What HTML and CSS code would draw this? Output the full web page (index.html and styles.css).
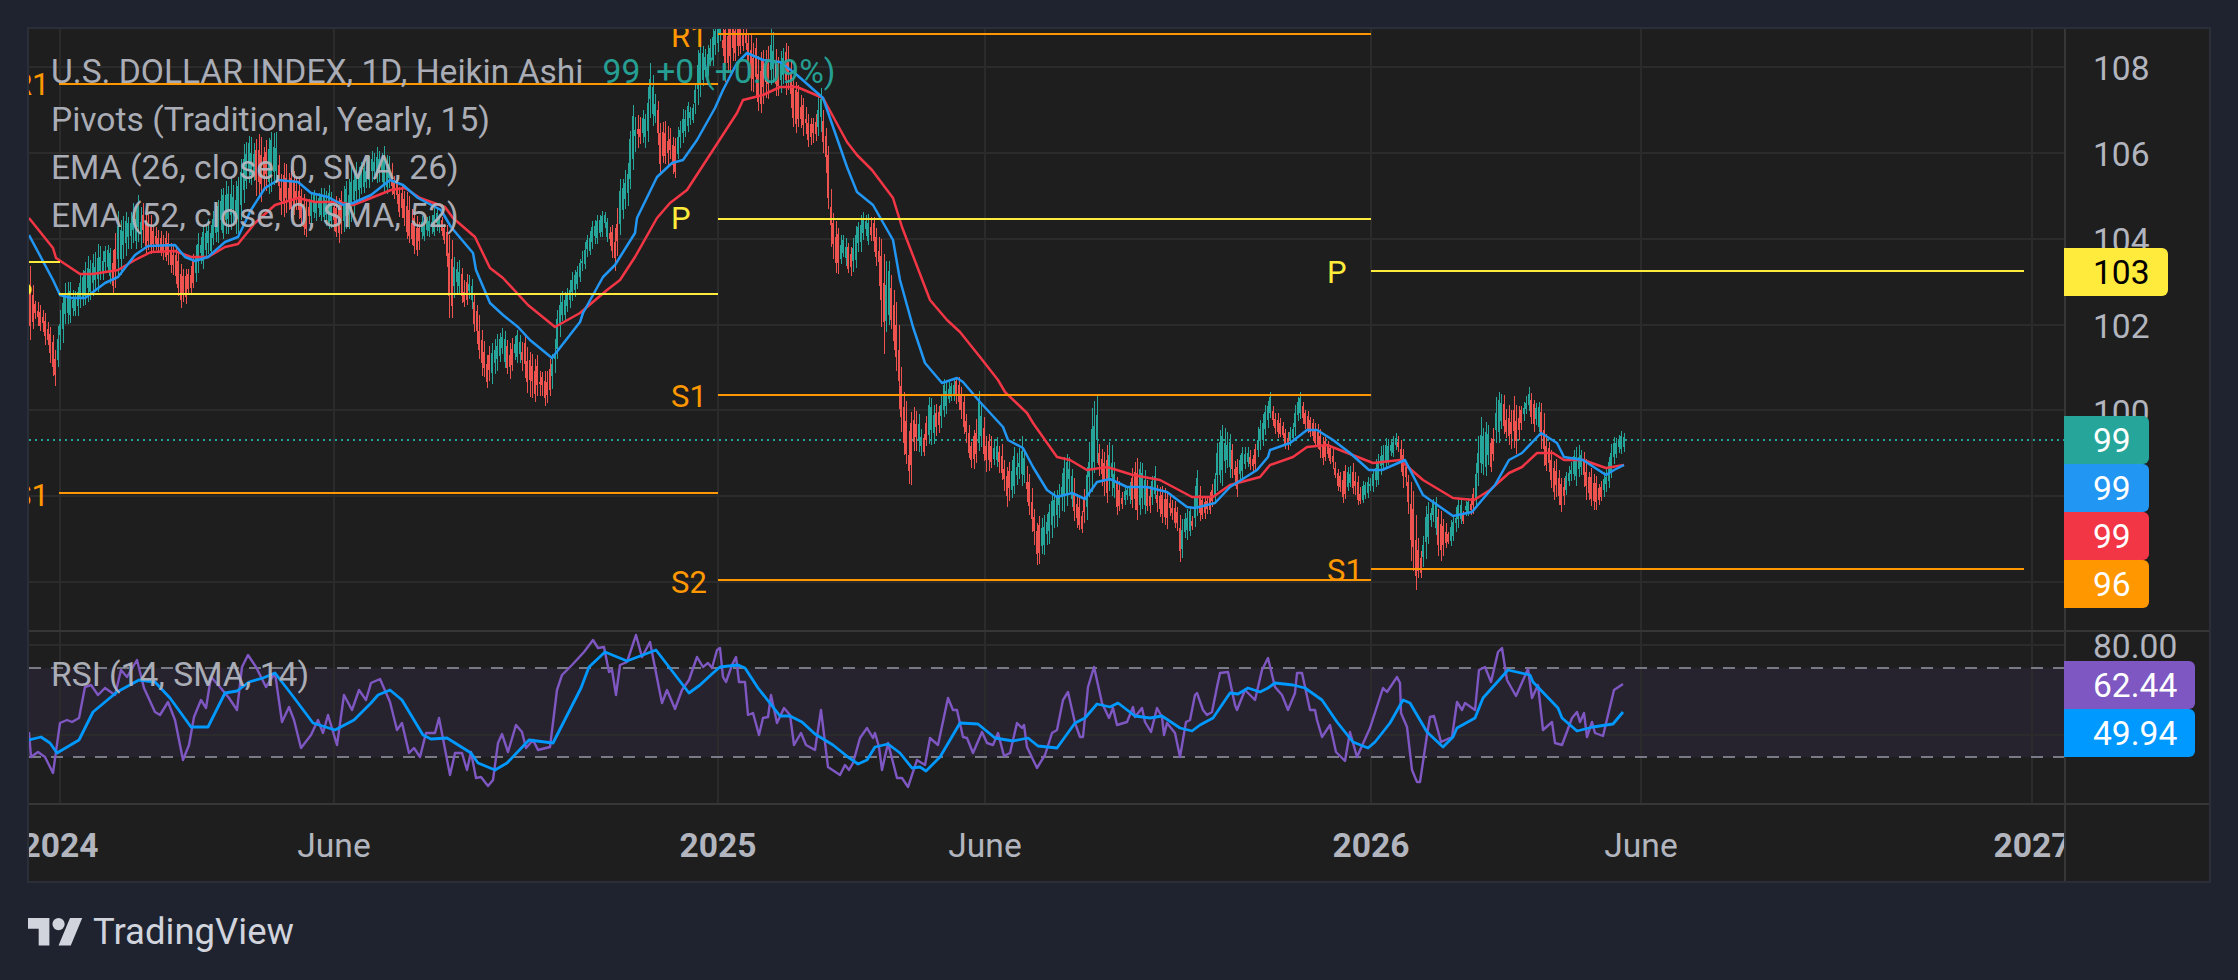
FILE: index.html
```html
<!DOCTYPE html>
<html>
  <head>
    <meta charset="UTF-8">
    <title>U.S. Dollar Index</title>
    <link rel="stylesheet" href="styles.css">
  </head>
  <body>
    <main class="page">
      <div class="chart">

        <!-- price pane -->
        <div class="pane">
          <svg class="plot" viewBox="29 29 2035 601">
            <g class="grid">
              <path d="M29 67H2064M29 153H2064M29 239H2064M29 325H2064M29 410H2064M29 496H2064M29 582H2064"/>
              <path d="M60 29V630M334 29V630M718 29V630M985 29V630M1371 29V630M1641 29V630M2032 29V630"/>
            </g>
            <path class="last-price" d="M29 440H2064"/>
            <g id="candles"></g>
            <polyline class="ema-slow" points="29,218 53,248 56,258 80,274 93,274 118,270 135,260 151,252 175,251 191,257 208,257 225,247 238,244 255,223 275,205 298,198 315,202 338,202 353,205 371,198 391,190 405,188 420,198 445,207 453,218 475,237 490,268 503,278 528,305 555,327 580,313 607,290 620,280 635,257 657,218 670,203 687,190 713,150 737,113 743,100 763,95 780,87 797,87 823,98 847,142 857,155 872,170 893,198 902,227 925,287 930,300 947,320 960,332 980,357 998,380 1005,392 1027,413 1033,423 1057,457 1070,460 1087,470 1107,467 1133,475 1160,480 1192,497 1213,497 1230,485 1260,477 1270,465 1293,457 1307,447 1327,445 1350,454 1373,463 1400,460 1423,480 1453,498 1474,500 1490,490 1509,473 1522,467 1537,453 1553,453 1564,460 1583,460 1606,468 1624,465"/>
            <polyline class="ema-fast" points="29,235 53,280 60,295 71,298 85,298 105,283 118,277 135,255 148,246 175,245 185,257 195,261 208,257 225,242 238,237 251,210 265,188 278,180 298,182 311,193 328,197 343,205 353,203 371,195 390,180 403,185 418,198 441,210 451,227 473,253 476,270 490,303 503,315 518,327 530,340 552,358 580,322 583,313 603,277 615,265 635,233 637,218 657,177 672,163 683,160 697,140 715,108 723,90 737,63 747,53 763,60 780,62 797,75 823,98 847,167 857,192 873,205 893,240 900,280 913,327 925,363 942,383 957,378 963,382 980,402 1003,427 1008,440 1023,448 1033,467 1047,490 1057,497 1072,493 1085,499 1097,482 1110,479 1127,487 1147,487 1167,492 1187,507 1195,508 1215,503 1230,487 1257,470 1268,457 1270,450 1290,443 1307,430 1317,430 1333,440 1350,453 1369,470 1382,470 1405,460 1423,495 1453,516 1472,512 1482,500 1495,485 1509,460 1522,453 1541,433 1557,443 1564,457 1583,460 1606,475 1614,470 1624,465"/>
            <path class="pivot-p" d="M29 262H60M59 294H718M718 219H1371M1371 271H2024"/>
            <path class="pivot-o" d="M59 84H718M59 493H718M718 34H1371M718 395H1371M718 580H1371M1371 569H2024"/>
            <text class="tag tag-o" x="13" y="95">R1</text>
            <text class="tag tag-p" x="13" y="305">P</text>
            <text class="tag tag-o" x="13" y="506">S1</text>
            <text class="tag tag-o" x="671" y="47">R1</text>
            <text class="tag tag-p" x="671" y="229">P</text>
            <text class="tag tag-o" x="671" y="407">S1</text>
            <text class="tag tag-o" x="671" y="593">S2</text>
            <text class="tag tag-p" x="1327" y="283">P</text>
            <text class="tag tag-o" x="1327" y="581">S1</text>
          </svg>
          <div class="legend">
            <div class="legend-row">
              <span>U.S. DOLLAR INDEX, 1D, Heikin Ashi</span>
              <span class="legend-up">99</span>
              <span class="legend-up">+0</span>
              <span class="legend-up">(+0.09%)</span>
            </div>
            <div class="legend-row">Pivots (Traditional, Yearly, 15)</div>
            <div class="legend-row">EMA (26, close, 0, SMA, 26)</div>
            <div class="legend-row">EMA (52, close, 0, SMA, 52)</div>
          </div>
        </div>

        <div class="pane axis">
          <div class="ticks">
            <div class="tick">108</div>
            <div class="tick">106</div>
            <div class="tick">104</div>
            <div class="tick">102</div>
            <div class="tick">100</div>
          </div>
          <div class="badge badge-pivot">103</div>
          <div class="badge-stack badge-stack-price">
            <div class="badge teal">99</div>
            <div class="badge blue">99</div>
            <div class="badge red">99</div>
            <div class="badge orange">96</div>
          </div>
        </div>

        <!-- rsi pane -->
        <div class="pane">
          <svg class="plot" viewBox="29 632 2035 171">
            <rect class="rsi-band" x="29" y="668" width="2035" height="89"/>
            <g class="grid">
              <path d="M29 645H2064M29 735H2064"/>
              <path d="M60 632V803M334 632V803M718 632V803M985 632V803M1371 632V803M1641 632V803M2032 632V803"/>
            </g>
            <path class="rsi-limit" d="M29 668H2064M29 757H2064"/>
            <polyline class="rsi-line" points="29,732 31,757 38,752 45,757 53,773 60,723 67,720 72,722 79,718 85,687 91,685 98,695 105,688 115,695 121,670 127,677 137,660 144,688 155,712 160,715 168,702 175,720 183,760 189,745 194,717 201,700 206,708 211,677 220,687 229,698 237,710 242,667 248,655 256,667 266,687 275,673 282,722 289,707 294,720 301,748 311,735 318,720 323,733 328,715 337,745 344,695 352,710 359,690 366,700 371,683 380,679 390,702 397,730 402,723 409,753 414,748 420,757 426,733 435,733 439,718 450,775 455,753 462,753 467,770 471,752 476,778 481,777 488,786 493,780 498,743 502,734 508,752 516,725 522,732 526,748 533,740 538,750 550,747 557,690 562,675 572,665 584,652 593,640 598,648 604,647 609,672 612,670 616,695 620,665 627,662 636,635 642,657 650,642 658,683 662,703 667,690 675,709 682,690 689,680 697,657 703,667 708,663 712,668 717,650 720,648 723,677 726,682 732,665 736,657 739,682 745,682 748,715 753,713 759,735 763,718 768,717 771,695 777,723 784,708 790,715 794,745 801,733 806,745 815,750 821,710 828,767 840,775 845,765 849,770 853,763 860,738 867,728 873,738 875,733 879,747 882,770 888,743 897,778 902,778 908,787 917,760 925,765 930,738 938,745 948,698 953,710 957,710 963,737 967,738 973,753 982,732 987,743 993,745 998,733 1004,756 1010,753 1017,723 1022,728 1024,725 1027,747 1037,768 1045,755 1052,733 1057,730 1063,700 1068,692 1075,723 1080,737 1083,737 1088,687 1094,667 1102,703 1109,718 1113,708 1117,725 1127,722 1133,707 1135,717 1142,708 1145,722 1151,732 1157,708 1162,717 1164,735 1167,723 1175,733 1180,757 1186,722 1190,720 1195,695 1197,693 1203,710 1207,715 1212,712 1217,687 1220,673 1228,672 1235,705 1237,710 1245,690 1255,700 1262,670 1268,658 1275,687 1282,695 1288,710 1295,693 1297,673 1302,673 1310,710 1315,710 1317,720 1322,737 1330,725 1336,752 1345,761 1350,732 1357,757 1370,728 1383,688 1387,692 1397,677 1400,683 1401,713 1407,727 1412,770 1417,782 1420,782 1427,735 1430,717 1434,716 1441,742 1452,737 1457,702 1462,710 1465,703 1475,710 1479,670 1485,667 1491,682 1498,652 1502,648 1507,680 1516,696 1528,669 1532,698 1538,685 1543,730 1552,722 1555,743 1562,745 1572,718 1577,712 1580,722 1584,713 1587,737 1592,722 1595,733 1603,736 1614,690 1623,684"/>
            <polyline class="rsi-avg" points="29,740 41,737 50,743 57,753 79,740 93,712 117,692 139,680 155,682 170,698 191,727 208,727 225,693 237,691 249,682 263,678 275,673 292,695 313,723 335,730 354,720 371,703 378,695 390,690 402,700 423,735 431,739 447,738 471,753 478,763 495,770 507,763 529,740 553,743 581,688 589,667 605,652 627,661 656,650 689,693 700,685 713,673 720,667 738,665 745,668 758,688 780,716 790,716 802,722 815,734 833,745 848,757 858,764 867,760 875,747 888,744 900,753 912,768 920,767 926,771 940,757 960,723 978,724 995,738 1013,741 1028,738 1038,746 1057,748 1075,723 1085,718 1097,704 1110,707 1118,703 1135,716 1150,718 1162,716 1180,728 1192,731 1200,725 1213,718 1230,693 1238,694 1248,688 1260,692 1268,688 1275,683 1293,685 1305,688 1322,700 1337,722 1353,742 1368,748 1375,742 1390,723 1403,700 1410,703 1427,732 1443,747 1453,737 1457,728 1475,718 1483,698 1508,670 1530,675 1533,682 1558,708 1562,718 1577,731 1593,727 1613,724 1623,712"/>
          </svg>
          <div class="legend legend-rsi">
            <div class="legend-row">RSI (14, SMA, 14)</div>
          </div>
        </div>

        <div class="pane axis">
          <div class="tick tick-rsi">80.00</div>
          <div class="badge-stack badge-stack-rsi">
            <div class="badge purple">62.44</div>
            <div class="badge sky">49.94</div>
          </div>
        </div>

        <!-- time scale -->
        <div class="pane">
          <svg class="plot" viewBox="29 805 2035 76">
            <text class="date date-year" x="60" y="857">2024</text>
            <text class="date" x="334" y="857">June</text>
            <text class="date date-year" x="718" y="857">2025</text>
            <text class="date" x="985" y="857">June</text>
            <text class="date date-year" x="1371" y="857">2026</text>
            <text class="date" x="1641" y="857">June</text>
            <text class="date date-year" x="2032" y="857">2027</text>
          </svg>
        </div>
        <div class="pane"></div>
      </div>

      <footer class="brand">
        <svg class="brand-mark" viewBox="0 4 36 18">
          <path d="M14 22H7V11H0V4h14v18zM28 22h-8l7.5-18h8L28 22z"/>
          <circle cx="20" cy="8" r="4"/>
        </svg>
        <span class="brand-name">TradingView</span>
      </footer>
    </main>
    <script src="chart.js"></script>
  </body>
</html>
```

FILE: styles.css
```css
*{
  box-sizing: border-box;
}
html, body{
  margin: 0;
  padding: 0;
  width: 100%;
  height: 100%;
  overflow: hidden;
  background: #1e232f;
}
body{
  font-family: 'Roboto', 'Liberation Sans', sans-serif;
  font-size: 33.6px;
  color: #b2b5be;
}
.page{
  padding: 27px 0 0 27px;
}

/* chart frame: the 2px gaps show through as pane dividers */
.chart{
  display: grid;
  grid-template-columns: 2035px 143px;
  grid-template-rows: 601px 171px 76px;
  gap: 2px;
  width: 2184px;
  height: 856px;
  background: #363636;
  border: 2px solid #2a2e39;
}
.pane{
  position: relative;
  background: #1e1e1e;
  overflow: hidden;
}
.plot{
  display: block;
  width: 100%;
  height: 100%;
}

/* plot lines */
.grid path{
  fill: none;
  stroke: #2b2b2b;
  stroke-width: 2;
}
.last-price{
  fill: none;
  stroke: #26a69a;
  stroke-width: 2;
  stroke-dasharray: 2 4;
}
.wick-up, .body-up, .wick-down, .body-down{
  fill: none;
  shape-rendering: crispEdges;
}
.wick-up{ stroke: #26a69a; stroke-width: 1; }
.body-up{ stroke: #26a69a; stroke-width: 2; }
.wick-down{ stroke: #ef5350; stroke-width: 1; }
.body-down{ stroke: #ef5350; stroke-width: 2; }
.ema-fast, .ema-slow, .rsi-line, .rsi-avg{
  fill: none;
  stroke-width: 2.5;
  stroke-linejoin: round;
}
.ema-fast{ stroke: #2196f3; }
.ema-slow{ stroke: #f23645; }
.rsi-line{ stroke: #7e57c2; stroke-width: 2.4; }
.rsi-avg{ stroke: #0099ff; stroke-width: 2.8; }
.pivot-p, .pivot-o{
  fill: none;
  stroke-width: 2;
}
.pivot-p{ stroke: #ffeb3b; }
.pivot-o{ stroke: #ff9800; }
.tag{
  font-size: 31px;
}
.tag-p{ fill: #ffeb3b; }
.tag-o{ fill: #ff9800; }
.rsi-band{
  fill: rgba(126, 87, 194, 0.1);
}
.rsi-limit{
  fill: none;
  stroke: #787b86;
  stroke-width: 2;
  stroke-dasharray: 12 10;
}

/* legend sits over the plot */
.legend{
  position: absolute;
  left: 22px;
  top: 19px;
  opacity: 0.95;
}
.legend-row{
  display: flex;
  gap: 16px;
  height: 48px;
  line-height: 48px;
  white-space: nowrap;
}
.legend-up{
  color: #26a69a;
}
.legend-up:nth-child(2){
  margin-left: 3px;
}
.legend-up:last-child{
  margin-left: -7px;
}

/* price scale */
.axis{
  padding-left: 27px;
  overflow: visible;
}
.ticks{
  margin-top: -3px;
}
.tick{
  height: 86px;
  line-height: 86px;
}
.tick-rsi{
  height: 30px;
  line-height: 30px;
}
.badge{
  height: 48px;
  line-height: 50px;
  padding: 0 18px 0 29px;
  margin-left: -2px;
  border-radius: 0 6px 6px 0;
  color: #fff;
  width: fit-content;
}
.badge-pivot{
  position: absolute;
  left: 0;
  top: 219px;
  color: #000;
  background: #ffeb3b;
}
.badge-stack{
  position: absolute;
  left: 0;
  display: flex;
  flex-direction: column;
}
.badge-stack-price{ top: 387px; }
.badge-stack-rsi{ top: 29px; }
.teal{ background: #26a69a; }
.blue{ background: #2196f3; }
.red{ background: #f23645; }
.orange{ background: #ff9800; }
.purple{ background: #7e57c2; }
.sky{ background: #0099ff; }

/* time scale */
.date{
  fill: #b2b5be;
  font-size: 33.6px;
  text-anchor: middle;
}
.date-year{
  font-weight: 700;
}

/* footer */
.brand{
  display: flex;
  align-items: center;
  gap: 10px;
  margin: 28px 0 0 1px;
}
.brand-mark{
  display: block;
  width: 55px;
  height: 27.5px;
  fill: #d1d4dc;
}
.brand-name{
  font-size: 36.5px;
  line-height: 42px;
  color: #d1d4dc;
}
```

FILE: chart.js
```js
// traced bars: x, high, low, up(1)/down(0)
var traced = [
  [28,255,335,0],[35,297,320,0],[41,303,330,0],[48,323,350,0],[55,347,383,0],[60,313,357,1],[66,277,320,1],[75,293,317,1],[85,263,307,1],[98,247,290,1],[108,247,270,1],[113,250,290,0],[118,213,283,1],[127,215,250,1],[138,198,242,1],[148,217,253,0],[161,230,253,0],[175,243,280,0],[182,267,308,0],[191,267,293,0],[198,237,273,1],[211,220,253,1],[221,192,233,1],[238,173,233,1],[248,132,177,1],[261,143,197,0],[276,133,180,1],[281,167,217,0],[298,177,213,0],[305,197,235,0],[315,192,217,1],[328,188,223,1],[338,203,238,0],[345,180,238,1],[361,163,193,1],[378,147,183,1],[388,152,190,1],[395,180,203,0],[408,193,237,0],[416,217,253,0],[425,220,237,1],[438,207,233,1],[445,223,243,0],[450,238,317,0],[456,258,290,1],[465,277,312,0],[470,273,300,1],[475,293,330,0],[480,323,370,0],[486,353,385,0],[495,333,377,1],[501,328,353,1],[510,343,383,0],[516,333,357,1],[525,340,385,0],
  [532,348,400,0],[540,367,400,0],[548,372,403,0],[554,340,385,1],[560,295,332,1],[567,285,313,1],[577,267,290,1],[583,245,273,1],[590,227,253,1],[598,213,240,1],[605,212,230,1],[610,223,250,0],[615,225,265,0],[620,178,233,1],[627,167,207,1],[633,108,163,1],[640,113,147,0],[645,115,148,1],[650,65,127,1],[655,90,127,1],[660,122,167,0],[665,123,170,0],[670,123,160,0],[675,143,177,0],[680,120,152,1],[687,103,130,1],[693,107,123,1],[698,45,102,1],[705,53,77,1],[715,20,60,1],[720,20,40,1],[725,20,77,0],[740,20,50,0],[746,27,53,0],[750,35,83,0],[758,52,112,0],[767,53,97,0],[772,27,87,1],[777,57,98,0],[783,50,83,1],[788,45,97,0],[793,83,128,0],[802,93,127,0],[805,100,138,0],[810,120,147,0],[815,117,145,0],[820,83,133,1],[826,127,173,0],[829,163,227,0],[832,198,262,0],[838,232,272,0],[843,235,258,1],[850,247,273,0],[855,233,268,1],[860,220,250,1],[865,210,237,1],[872,217,247,0],[877,223,267,0],[882,237,355,0],[887,258,317,1],[892,280,330,0],[897,307,380,0],[900,357,440,0],[905,400,453,0],
  [909,423,498,0],[913,413,458,0],[920,417,453,1],[923,437,457,0],[930,393,440,1],[938,410,440,0],[943,380,417,1],[952,380,400,1],[960,380,408,0],[966,412,443,0],[971,440,465,0],[976,427,465,0],[980,387,443,1],[985,430,470,0],[990,438,470,0],[995,438,467,1],[1002,443,480,0],[1007,470,512,0],[1013,453,493,1],[1023,435,480,1],[1027,463,510,0],[1032,490,538,0],[1037,523,565,0],[1042,520,553,1],[1050,503,543,1],[1057,487,527,1],[1065,457,507,1],[1070,457,493,1],[1075,483,527,0],[1082,510,533,0],[1087,473,518,1],[1092,400,483,1],[1097,398,470,1],[1099,437,473,0],[1103,457,497,0],[1112,440,497,1],[1117,480,512,0],[1122,490,510,0],[1127,487,502,1],[1135,460,515,0],[1142,465,508,1],[1150,488,515,0],[1154,468,500,1],[1158,485,513,0],[1165,490,528,0],[1170,492,520,0],[1177,507,527,0],[1181,527,572,0],[1183,513,545,1],[1188,503,537,1],[1193,518,530,0],[1196,470,520,1],[1200,488,517,0],[1206,503,518,0],[1210,493,513,0],[1215,468,505,1],[1220,430,487,1],[1228,433,470,1],[1233,448,480,0],[1237,465,495,0],[1242,447,477,1],[1247,447,467,1],[1253,455,473,0],[1258,420,460,1],[1265,407,437,1],[1270,395,420,1],[1275,410,435,0],[1282,422,437,0],[1287,432,453,0],[1292,427,443,1],[1297,395,427,1],[1300,393,418,1],[1305,410,427,0],[1312,418,437,0],[1322,433,462,0],[1328,443,460,0],[1333,450,470,0],[1337,470,488,0],[1343,470,502,0],[1348,465,488,1],
  [1354,465,493,0],[1360,485,507,0],[1365,483,500,1],[1371,475,493,1],[1375,458,487,1],[1382,442,473,1],[1388,442,463,1],[1394,432,453,1],[1398,433,453,0],[1402,443,485,0],[1407,467,490,0],[1410,483,547,0],[1415,510,600,0],[1417,537,587,0],[1420,553,580,0],[1423,532,570,1],[1426,507,558,1],[1430,507,530,1],[1435,497,517,1],[1437,507,557,0],[1442,518,560,0],[1448,532,547,0],[1453,515,542,1],[1459,493,530,1],[1463,510,523,0],[1467,497,517,1],[1472,497,517,0],[1476,463,507,1],[1481,423,477,1],[1488,423,467,1],[1492,448,475,0],[1497,387,443,1],[1501,390,425,1],[1505,405,432,0],[1511,403,453,0],[1515,400,457,0],[1518,408,445,0],[1525,400,417,1],[1529,383,410,1],[1533,403,430,0],[1538,398,423,1],[1543,413,473,0],[1549,448,473,0],[1554,457,497,0],[1562,482,512,0],[1566,472,495,1],[1572,457,482,1],[1577,438,487,1],[1581,452,477,1],[1585,448,497,0],[1589,473,497,0],[1593,470,512,0],[1599,483,503,0],[1605,473,497,1],[1609,457,487,1],[1614,437,463,1],[1618,433,455,1],[1624,432,450,1]
];

var seed = 11;
function jitter(){
  seed = (seed * 9301 + 49297) % 233280;
  return seed / 233280 - 0.5;
}

function buildCandles(){
  var d = { wickUp: '', bodyUp: '', wickDown: '', bodyDown: '' };
  var i = traced.length - 2;
  for (var x = 1624; x >= 29; x -= 2.51) {
    while (i > 0 && traced[i][0] > x) i--;
    var a = traced[i], b = traced[i + 1];
    var t = (x - a[0]) / (b[0] - a[0]);
    var high = a[1] + (b[1] - a[1]) * t;
    var low = a[2] + (b[2] - a[2]) * t;
    var h = low - high;
    high += jitter() * h * 0.3;
    low += jitter() * h * 0.3;
    var top = high + h * (0.15 + Math.abs(jitter()) * 0.4);
    var bottom = low - h * (0.15 + Math.abs(jitter()) * 0.4);
    var up = (t < 0.5 ? a : b)[3];
    var px = Math.round(x);
    var wick = 'M' + px + ' ' + Math.round(high) + 'V' + Math.round(low);
    var body = 'M' + px + ' ' + Math.round(top) + 'V' + Math.round(bottom);
    if (up) { d.wickUp += wick; d.bodyUp += body; }
    else { d.wickDown += wick; d.bodyDown += body; }
  }
  var svg = 'http://www.w3.org/2000/svg';
  var group = document.getElementById('candles');
  [['wick-up', d.wickUp], ['body-up', d.bodyUp], ['wick-down', d.wickDown], ['body-down', d.bodyDown]].forEach(function(part){
    var path = document.createElementNS(svg, 'path');
    path.setAttribute('class', part[0]);
    path.setAttribute('d', part[1]);
    group.appendChild(path);
  });
}

buildCandles();
```
